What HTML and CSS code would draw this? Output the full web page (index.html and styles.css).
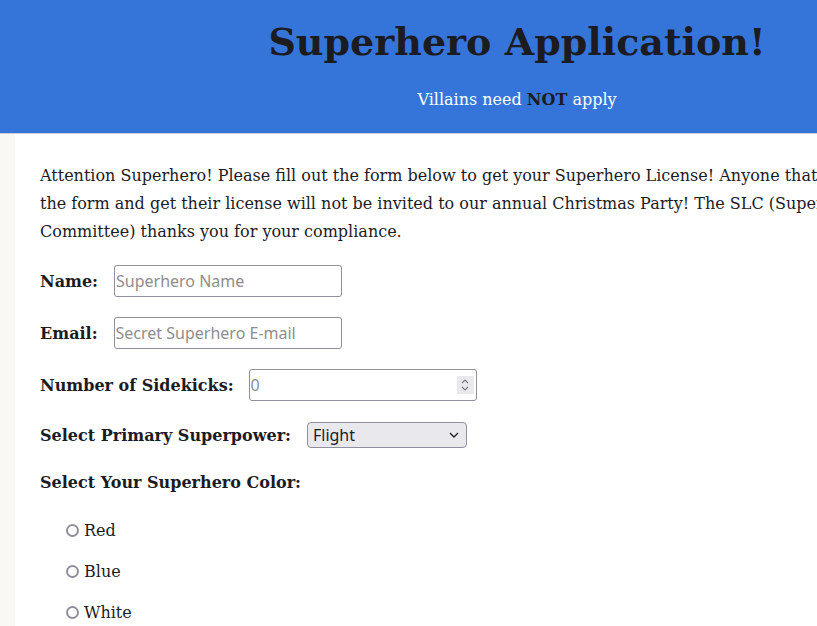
FILE: index.html
```html
<!DOCTYPE html>
<html lang="en">
<head>
<meta charset="utf-8">
<title>Superhero Application!</title>
<link rel="stylesheet" href="styles.css">
</head>
<body>
<header class="hero">
  <h1 class="hero-title">Superhero Application!</h1>
  <p class="hero-sub">Villains need <strong>NOT</strong> apply</p>
</header>
<main class="content">
  <p class="intro">Attention Superhero! Please fill out the form below to get your Superhero License! Anyone that doesn't fill out the form and get their license will not be invited to our annual Christmas Party! The SLC (Superhero License Committee) thanks you for your compliance.</p>
  <form class="app-form">
    <div class="field">
      <label class="label" for="name">Name:</label>
      <input class="text-input" id="name" type="text" placeholder="Superhero Name">
    </div>
    <div class="field">
      <label class="label" for="email">Email:</label>
      <input class="text-input" id="email" type="email" placeholder="Secret Superhero E-mail">
    </div>
    <div class="field">
      <label class="label" for="sidekicks">Number of Sidekicks:</label>
      <span class="number-wrap">
        <input class="text-input number-input" id="sidekicks" type="number" placeholder="0">
        <span class="spinner">
          <svg width="10" height="16" viewBox="0 0 10 16"><path d="M2 6 L5 3 L8 6" fill="none" stroke="#7a7a80" stroke-width="1.2"/><path d="M2 10 L5 13 L8 10" fill="none" stroke="#7a7a80" stroke-width="1.2"/></svg>
        </span>
      </span>
    </div>
    <div class="field field-select">
      <label class="label" for="power">Select Primary Superpower:</label>
      <span class="select-wrap">
        <select class="select" id="power">
          <option>Flight</option>
          <option>Super Strength</option>
          <option>Invisibility</option>
        </select>
        <svg class="select-arrow" width="10" height="6" viewBox="0 0 10 6"><path d="M1 1 L5 5 L9 1" fill="none" stroke="#222" stroke-width="1.4"/></svg>
      </span>
    </div>
    <div class="group-label">Select Your Superhero Color:</div>
    <div class="radios">
      <label class="radio"><input type="radio" name="color" class="radio-input"><span>Red</span></label>
      <label class="radio"><input type="radio" name="color" class="radio-input"><span>Blue</span></label>
      <label class="radio"><input type="radio" name="color" class="radio-input"><span>White</span></label>
    </div>
  </form>
</main>
</body>
</html>
```

FILE: styles.css
```css
html, body {
  margin: 0;
  padding: 0;
}
body {
  background: #f9f8f5;
  font-family: "DejaVu Serif", serif;
  font-size: 16px;
  color: #1c1b1f;
  width: 1034px;
}
.hero {
  background: #3575d9;
  text-align: center;
  height: 133px;
  border-bottom: 1px solid #c9cdd4;
  box-sizing: content-box;
  overflow: hidden;
}
.hero-title {
  margin: 0;
  padding-top: 19px;
  font-size: 38px;
  line-height: 46px;
  font-weight: bold;
  color: #1c1b1f;
}
.hero-sub {
  margin: 25px 0 0;
  color: #ffffff;
  font-size: 16px;
  line-height: 20px;
}
.hero-sub strong {
  color: #1c1b1f;
}
.content {
  margin-left: 15px;
  background: #ffffff;
  padding: 28px 25px 40px;
  min-height: 600px;
}
.intro {
  margin: 0 0 19px;
  line-height: 28px;
  width: 900px;
}
.field {
  display: flex;
  align-items: center;
  gap: 16px;
  height: 32px;
  margin-bottom: 20px;
}
.field-select {
  height: 28px;
  margin-bottom: 20px;
}
.label, .group-label {
  font-weight: bold;
}
.text-input {
  box-sizing: border-box;
  width: 228px;
  height: 32px;
  border: 1px solid #8f8f9d;
  border-radius: 3px;
  padding: 0 1px;
  font-family: "Noto Sans", sans-serif;
  font-size: 16px;
  color: #1c1b1f;
  background: #fff;
  outline: none;
}
.text-input::placeholder {
  color: #8d8d8d;
}
.number-wrap, .select-wrap {
  position: relative;
  display: inline-block;
  height: 32px;
}
.number-wrap {
  margin-left: -1px;
}
.select-wrap {
  height: 26px;
}
.number-input {
  appearance: textfield;
  -moz-appearance: textfield;
}
.number-input::-webkit-inner-spin-button,
.number-input::-webkit-outer-spin-button {
  -webkit-appearance: none;
  margin: 0;
}
.spinner {
  position: absolute;
  right: 3px;
  top: 7px;
  width: 17px;
  height: 18px;
  background: #e9e9ed;
  display: flex;
  align-items: center;
  justify-content: center;
}
.select {
  appearance: none;
  -webkit-appearance: none;
  box-sizing: border-box;
  width: 160px;
  height: 26px;
  border: 1px solid #8f8f9d;
  border-radius: 4px;
  background: #e9e9ed;
  font-family: "Noto Sans", sans-serif;
  font-size: 16px;
  color: #1c1b1f;
  padding: 0 5px;
  margin: 0;
}
.select-arrow {
  position: absolute;
  right: 8px;
  top: 10px;
  pointer-events: none;
}
.group-label {
  line-height: 28px;
  margin-bottom: 22px;
}
.radios {
  display: flex;
  flex-direction: column;
  gap: 19px;
  padding-left: 26px;
}
.radio {
  display: flex;
  align-items: center;
  gap: 5px;
  height: 22px;
}
.radio-input {
  appearance: none;
  -webkit-appearance: none;
  width: 13px;
  height: 13px;
  margin: 0;
  border: 2px solid #8f8f9d;
  border-radius: 50%;
  box-sizing: border-box;
  background: #fff;
}
```
